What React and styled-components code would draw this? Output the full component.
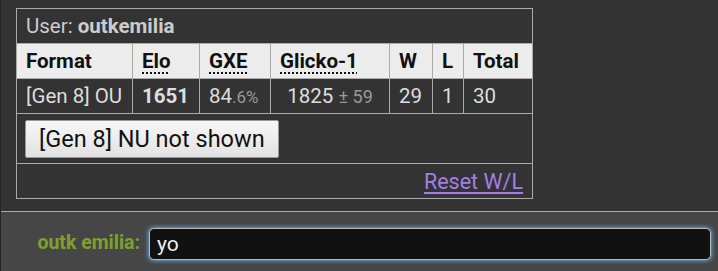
import React from 'react'
import styled, { createGlobalStyle } from 'styled-components'

const GlobalStyle = createGlobalStyle`
  html, body {
    margin: 0;
    padding: 0;
    background: #333;
  }
  body {
    font-family: Roboto, "Liberation Sans", sans-serif;
  }
`

const Page = styled.div`
  display: flex;
  flex-direction: column;
  height: 271px;
  border-left: 1px solid #252525;
  overflow: hidden;
`

const Log = styled.div`
  height: 203px;
  padding: 8px 0 0 15px;
  background: #333;
  border-bottom: 1px solid #aaa;
`

const Table = styled.table`
  border-collapse: collapse;
  table-layout: fixed;
  width: 516px;
  border: 1px solid #aaa;
  font-size: 20.5px;
  color: #ddd;
`

const Cell = styled.td`
  border: 1px solid #aaa;
  padding: 0 9px;
  height: ${p => p.$h || 34}px;
  text-align: ${p => p.$align || 'left'};
  font-weight: ${p => (p.$bold ? 700 : 400)};
  white-space: nowrap;
`

const Caption = styled.td`
  border: 1px solid #aaa;
  height: 34px;
  padding: 0 9px;
  color: #ccc;
`

const Head = styled.th`
  border: 1px solid #aaa;
  background: #ececec;
  color: #111;
  height: 34px;
  padding: 0 9px;
  text-align: left;
  font-weight: 700;
  white-space: nowrap;
`

const Abbr = styled.abbr`
  text-decoration: underline dotted;
  text-decoration-thickness: 2px;
  text-underline-offset: 4px;
`

const Dim = styled.small`
  color: #999;
  font-size: ${p => p.$size || 17}px;
`

const HiddenButton = styled.button`
  font-family: inherit;
  font-size: 23.5px;
  color: #111;
  height: 38px;
  padding: 0 13px;
  margin-left: -1px;
  border: 1px solid #999;
  border-radius: 2px;
  background: linear-gradient(#f7f7f7, #e2e2e2);
`

const ResetLink = styled.a`
  color: #a47ee8;
  font-size: 21.5px;
  text-decoration: underline;
  text-decoration-thickness: 2px;
  text-underline-offset: 3px;
`

const ChatBar = styled.div`
  flex: 1;
  display: flex;
  align-items: flex-start;
  padding-top: 16px;
  background: #464646;
`

const Label = styled.label`
  width: 139px;
  text-align: right;
  padding-top: 3px;
  color: #7fa02f;
  font-weight: 700;
  font-size: 19.5px;
  white-space: nowrap;
`

const Input = styled.div`
  margin-left: 9px;
  width: 553px;
  height: 30px;
  padding-left: 7px;
  line-height: 30px;
  background: #111;
  color: #eee;
  font-size: 21px;
  border: 1px solid #bbb;
  border-radius: 5px;
  box-shadow: 0 0 4px 1px #6a9fd6;
`

const formats = [
  { name: '[Gen 8] OU', elo: 1651, gxe: '84', gxeDec: '.6%', glicko: 1825, dev: 59, w: 29, l: 1, total: 30 },
]

const App = () => (
  <Page>
    <GlobalStyle />
    <Log>
      <Table>
        <colgroup>
          <col style={{ width: 116 }} />
          <col style={{ width: 67 }} />
          <col style={{ width: 71 }} />
          <col style={{ width: 119 }} />
          <col style={{ width: 43 }} />
          <col style={{ width: 31 }} />
          <col style={{ width: 69 }} />
        </colgroup>
        <tbody>
          <tr>
            <Caption colSpan={7}>
              User: <strong>outkemilia</strong>
            </Caption>
          </tr>
          <tr>
            <Head>Format</Head>
            <Head><Abbr title="Elo rating">Elo</Abbr></Head>
            <Head><Abbr title="user's percentage chance of winning a random battle">GXE</Abbr></Head>
            <Head><Abbr title="Glicko-1 rating system: rating±deviation">Glicko-1</Abbr></Head>
            <Head>W</Head>
            <Head>L</Head>
            <Head>Total</Head>
          </tr>
          {formats.map(f => (
            <tr key={f.name}>
              <Cell>{f.name}</Cell>
              <Cell $bold>{f.elo}</Cell>
              <Cell>{f.gxe}<Dim>{f.gxeDec}</Dim></Cell>
              <Cell $align="center">{f.glicko} <Dim $size={18}>± {f.dev}</Dim></Cell>
              <Cell>{f.w}</Cell>
              <Cell>{f.l}</Cell>
              <Cell>{f.total}</Cell>
            </tr>
          ))}
          <tr>
            <Cell colSpan={7} $h={49}>
              <HiddenButton type="button">[Gen 8] NU not shown</HiddenButton>
            </Cell>
          </tr>
          <tr>
            <Cell colSpan={7} $align="right">
              <ResetLink href="#">Reset W/L</ResetLink>
            </Cell>
          </tr>
        </tbody>
      </Table>
    </Log>
    <ChatBar>
      <Label>outk emilia:</Label>
      <Input>yo</Input>
    </ChatBar>
  </Page>
)

export default App
